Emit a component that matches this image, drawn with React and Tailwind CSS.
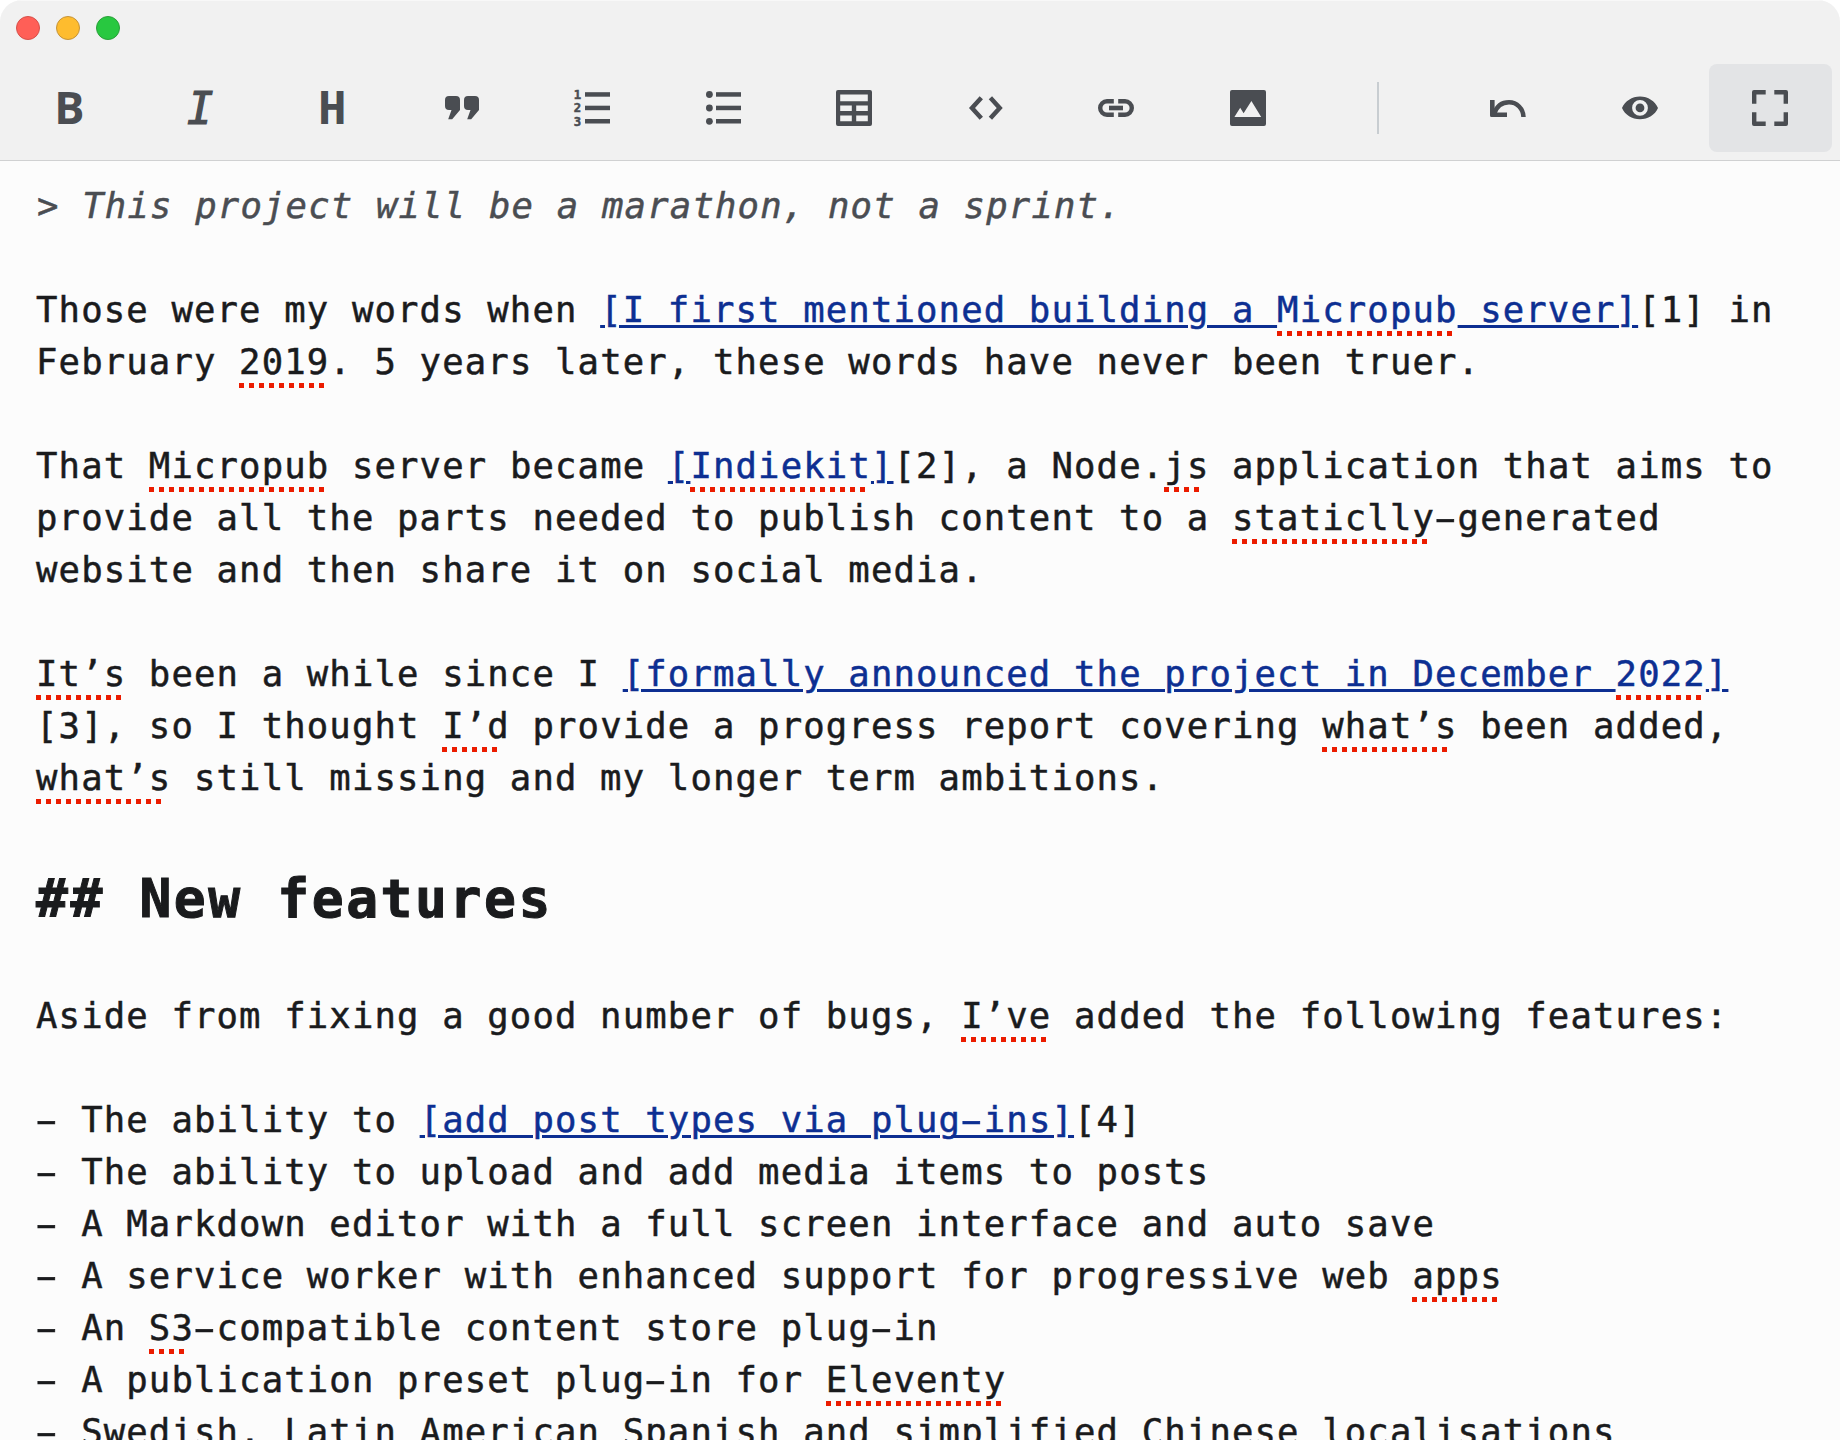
const Svg = ({ children, className = "" }) => (
  <svg width="36" height="36" viewBox="0 0 36 36" fill="currentColor" className={`shrink-0 overflow-visible ${className}`}>
    {children}
  </svg>
);

const Quote = () => (
  <Svg>
    <path d="M5 6h7a4 4 0 0 1 4 4v10l-7.8 9.3H4.2L7.5 20H5a4 4 0 0 1-4-4v-6a4 4 0 0 1 4-4z" />
    <path d="M24 6h7a4 4 0 0 1 4 4v10l-7.8 9.3h-4L26.500 20H24a4 4 0 0 1-4-4v-6a4 4 0 0 1 4-4z" />
  </Svg>
);

const Rows = ({ x }) => (
  <>
    <rect x={x} y="2.2" width="25" height="4.500" />
    <rect x={x} y="15.700" width="25" height="4.500" />
    <rect x={x} y="29" width="25" height="4.500" />
  </>
);

const Numbered = () => (
  <Svg className="-ml-0.5">
    <g fontFamily="DejaVu Sans Mono, monospace" fontWeight="700" fontSize="12.3" stroke="currentColor" strokeWidth="0.5">
      <text x="-0.3" y="9">1</text>
      <text x="-0.3" y="22.300">2</text>
      <text x="-0.3" y="35.800">3</text>
    </g>
    <Rows x="11" />
  </Svg>
);

const Bullets = () => (
  <Svg>
    <circle cx="3.4" cy="4.500" r="3.400" />
    <circle cx="3.4" cy="18" r="3.400" />
    <circle cx="3.4" cy="31.300" r="3.400" />
    <Rows x="10" />
  </Svg>
);

const Table = () => (
  <Svg className="-ml-0.5">
    <path
      fillRule="evenodd"
      d="M2 0h32a2 2 0 0 1 2 2v32a2 2 0 0 1-2 2H2a2 2 0 0 1-2-2V2a2 2 0 0 1 2-2zM4.200 4.400v6.800h27.600V4.400zM4.200 15.600v5.400h11.600v-5.400zM20.200 15.600v5.400h11.600v-5.400zM4.200 25.600v5.600h11.600v-5.600zM20.200 25.600v5.600h11.600v-5.600z"
    />
  </Svg>
);

const Code = () => (
  <Svg className="-mr-0.5">
    <path
      d="M13.300 7.700L4 18l9.300 10.300M22.400 7.700L31.700 18l-9.300 10.300"
      fill="none"
      stroke="currentColor"
      strokeWidth="4.500"
    />
  </Svg>
);

const Link = () => (
  <Svg>
    <path
      d="M15.800 11.200H9a6.800 6.800 0 0 0 0 13.600h6.800M20.200 11.200H27a6.800 6.800 0 0 1 0 13.600h-6.800"
      fill="none"
      stroke="currentColor"
      strokeWidth="4.400"
    />
    <rect x="11" y="15.700" width="14" height="4.600" />
  </Svg>
);

const Picture = () => (
  <Svg className="-mr-0.5">
    <path
      fillRule="evenodd"
      d="M2 0h32a2 2 0 0 1 2 2v32a2 2 0 0 1-2 2H2a2 2 0 0 1-2-2V2a2 2 0 0 1 2-2zM4.400 27h26.800L21.400 11l-7.800 12.300L10.200 17.800z"
    />
  </Svg>
);

const Undo = () => (
  <Svg className="-ml-0.5">
    <path d="M0 10h4.600v12.600H17V27H1.500A1.500 1.500 0 0 1 0 25.500z" />
    <path
      d="M33.500 27C33.200 18.500 27 12.300 19 12.300C12 12.300 6.500 16.500 4 24"
      fill="none"
      stroke="currentColor"
      strokeWidth="4.500"
    />
  </Svg>
);

const Eye = () => (
  <Svg>
    <path
      fillRule="evenodd"
      d="M0 18C3 11 10 6.500 18 6.500S33 11 36 18C33 25 26 29.200 18 29.200S3 25 0 18zM18 10a7.900 7.900 0 1 0 0 15.800a7.900 7.900 0 0 0 0-15.800z"
    />
    <circle cx="18" cy="17.900" r="4.400" />
  </Svg>
);

const Fullscreen = () => (
  <Svg className="-ml-0.5">
    <path d="M2 0h11.700v4.400H4.400v9.300H0V2a2 2 0 0 1 2-2zM34 0H22.300v4.400h9.300v9.300H36V2a2 2 0 0 0-2-2zM2 36h11.700v-4.400H4.400v-9.300H0V34a2 2 0 0 0 2 2zM34 36H22.300v-4.400h9.300v-9.300H36V34a2 2 0 0 1-2 2z" />
  </Svg>
);

const Separator = () => <span className="h-[52px] w-0.5 bg-[#c8cdd1]" />;

const tools = [
  <span className="mb-1 font-['Open_Sans',sans-serif] text-[45px] leading-none font-bold">B</span>,
  <span className="mt-0.5 font-['DejaVu_Sans_Mono',monospace] text-[44px] leading-none italic [-webkit-text-stroke:1.2px_#4a4d52]">I</span>,
  <span className="mt-0.5 ml-0.5 scale-x-108 font-['DejaVu_Sans_Mono',monospace] text-[44px] leading-none font-bold">H</span>,
  <Quote />,
  <Numbered />,
  <Bullets />,
  <Table />,
  <Code />,
  <Link />,
  <Picture />,
  <Separator />,
  <Undo />,
  <Eye />,
  <Fullscreen />,
];

// Hyphens are drawn wide, filling most of their character cell.
const Text = ({ children, linked }) =>
  children.split(/(-)/).map((part, i) =>
    part === "-" ? (
      <span key={i} className={linked ? "inline-block scale-x-185 underline decoration-[3px] underline-offset-[3px]" : "inline-block scale-x-185"}>
        -
      </span>
    ) : (
      part
    )
  );

const PITCH = 22.57;

// A word flagged by the spelling checker, with red dots below it.
const S = ({ children }) => (
  <span
    className="inline-block h-[52px] bg-[repeating-linear-gradient(90deg,#eb1c00_0_5px,transparent_5px_10px)] bg-no-repeat [background-position:0_47px]"
    style={{ backgroundSize: `${Math.floor((children.length * PITCH) / 10) * 10}px 5px` }}
  >
    {children}
  </span>
);

const A = ({ children }) => (
  <span className="text-[#0d2f92] underline decoration-[3px] underline-offset-[3px]">{children}</span>
);

const Line = ({ children }) => <div className="h-[52px]">{children}</div>;

export default function App() {
  return (
    <div className="h-[1440px] w-[1840px] overflow-hidden bg-white">
      <div className="flex h-full flex-col overflow-hidden rounded-t-[22px] bg-[#fcfcfc]">
        <header className="flex h-[161px] shrink-0 flex-col border-t border-b border-t-[#f8f8f8] border-b-[#d0d1d2] bg-[#f1f1f1]">
          <div className="flex h-[63px] gap-4 pt-[15px] pl-4">
            <span className="size-6 rounded-full border border-[#d5504a] bg-[#ff5f57]" />
            <span className="size-6 rounded-full border border-[#c4933a] bg-[#febc2e]" />
            <span className="size-6 rounded-full border border-[#2b9f3a] bg-[#28c840]" />
          </div>
          <div className="grid h-[88px] grid-cols-14 gap-2 px-2 text-[#4a4d52]">
            {tools.map((tool, i) => (
              <div
                key={i}
                className={
                  i === 13
                    ? "flex items-center justify-center rounded-lg bg-[#e3e4e6]"
                    : "flex items-center justify-center"
                }
              >
                {tool}
              </div>
            ))}
          </div>
        </header>

        <main className="px-9 pt-[19px] font-['DejaVu_Sans_Mono',monospace] text-[35.6px] leading-[52px] tracking-[1.145px] whitespace-pre text-[#1a1b1d] [-webkit-text-stroke:0.5px]">
          <div className="h-[52px] pl-px tracking-[1.18px] text-[#4a4d52] italic">&gt; This project will be a marathon, not a sprint.</div>
          <Line />
          <Line>Those were my words when <A>[I first mentioned building a </A><span className="text-[#0d2f92]"><S>Micropub</S></span><A> server]</A>[1] in</Line>
          <Line>February <S>2019</S>. 5 years later, these words have never been truer.</Line>
          <Line />
          <Line>That <S>Micropub</S> server became <A>[</A><span className="text-[#0d2f92]"><S>Indiekit</S></span><A>]</A>[2], a Node.<S>js</S> application that aims to</Line>
          <Line>provide all the parts needed to publish content to a <S>staticlly</S><Text>-generated</Text></Line>
          <Line>website and then share it on social media.</Line>
          <Line />
          <Line><S>It’s</S> been a while since I <A>[formally announced the project in December </A><span className="text-[#0d2f92]"><S>2022</S></span><A>]</A></Line>
          <Line>[3], so I thought <S>I’d</S> provide a progress report covering <S>what’s</S> been added,</Line>
          <Line><S>what’s</S> still missing and my longer term ambitions.</Line>
          <Line />
          <h2 className="h-[82px] pt-0.5 text-[53px] leading-[82px] font-bold tracking-[2.55px] [-webkit-text-stroke:1px]">## New features</h2>
          <Line />
          <Line>Aside from fixing a good number of bugs, <S>I’ve</S> added the following features:</Line>
          <Line />
          <Line><Text>- The ability to </Text><A>[add post types via plug<Text linked>-</Text>ins]</A>[4]</Line>
          <Line><Text>- The ability to upload and add media items to posts</Text></Line>
          <Line><Text>- A Markdown editor with a full screen interface and auto save</Text></Line>
          <Line><Text>- A service worker with enhanced support for progressive web </Text><S>apps</S></Line>
          <Line><Text>- An </Text><S>S3</S><Text>-compatible content store plug-in</Text></Line>
          <Line><Text>- A publication preset plug-in for </Text><S>Eleventy</S></Line>
          <Line><Text>- Swedish, Latin American Spanish and simplified Chinese localisations</Text></Line>
        </main>
      </div>
    </div>
  );
}
